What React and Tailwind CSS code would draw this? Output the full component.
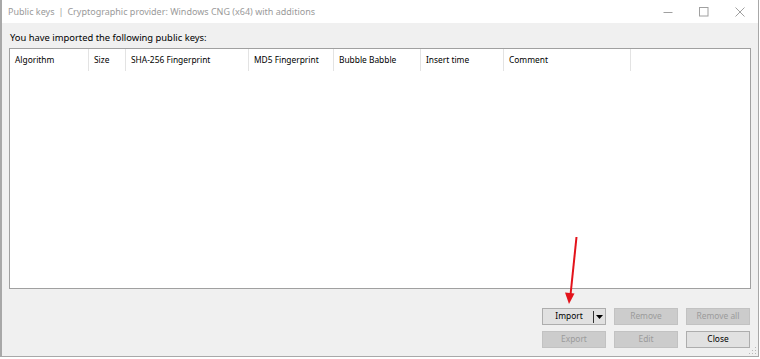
import React from "react";

const cols = [
  { w: "w-[79px]", t: "Algorithm" },
  { w: "w-[37px]", t: "Size" },
  { w: "w-[123px]", t: "SHA-256 Fingerprint" },
  { w: "w-[85px]", t: "MD5 Fingerprint" },
  { w: "w-[87px]", t: "Bubble Babble" },
  { w: "w-[83px]", t: "Insert time" },
  { w: "w-[127px]", t: "Comment" },
];

function Btn({ children, disabled, className = "" }) {
  return (
    <div
      className={
        "w-[64px] h-[17px] border flex items-center justify-center text-[8.4px] leading-none " +
        (disabled
          ? "bg-[#cccccc] border-[#c2c2c2] text-[#9b9b9b] "
          : "bg-[#e1e1e1] border-[#adadad] text-black ") +
        className
      }
    >
      {children}
    </div>
  );
}

export default function App() {
  return (
    <div
      className="w-[760px] h-[359px] bg-white overflow-hidden relative"
      style={{ fontFamily: '"Noto Sans", "Open Sans", sans-serif' }}
    >
      <div className="w-[759px] h-[357px] border-l-2 border-r border-b border-[#a8a8a8] flex flex-col">
        {/* Title bar */}
        <div className="h-[23px] bg-white flex items-center">
          <div className="pl-[6px] text-[9px] text-[#9a9a9a] leading-none flex-1 whitespace-nowrap flex items-center">
            <span>Public keys</span>
            <span className="mx-[4px]">|</span>
            <span>Cryptographic provider: Windows CNG (x64) with additions</span>
          </div>
          <div className="flex h-full">
            <div className="w-[36px] h-full flex items-center justify-center">
              <svg width="10" height="10" viewBox="0 0 10 10">
                <line x1="0.5" y1="5.5" x2="9.5" y2="5.5" stroke="#a0a0a0" strokeWidth="1" />
              </svg>
            </div>
            <div className="w-[36px] h-full flex items-center justify-center">
              <svg width="10" height="10" viewBox="0 0 10 10">
                <rect x="0.5" y="0.5" width="8.5" height="8.5" fill="none" stroke="#a0a0a0" strokeWidth="1" />
              </svg>
            </div>
            <div className="w-[36px] h-full flex items-center justify-center">
              <svg width="10" height="10" viewBox="0 0 10 10">
                <path d="M0.5 0.5 L9.5 9.5 M9.5 0.5 L0.5 9.5" stroke="#a0a0a0" strokeWidth="1" />
              </svg>
            </div>
          </div>
        </div>

        {/* Body */}
        <div className="flex-1 bg-[#f0f0f0] flex flex-col px-[7px] relative">
          <div className="h-[15px] mt-[7px] pl-[1px] text-[9.4px] leading-[15px] text-black whitespace-nowrap">
            You have imported the following public keys:
          </div>
          <div className="mt-[3px] h-[241px] border border-[#a0a0a0] bg-white">
            <div className="flex h-[22px]">
              {cols.map((c) => (
                <div
                  key={c.t}
                  className={
                    c.w +
                    " h-full border-r border-[#e3e3e3] flex items-center pl-[5px] text-[8.4px] text-black whitespace-nowrap leading-none"
                  }
                >
                  {c.t}
                </div>
              ))}
            </div>
          </div>

          <div className="mt-[19px] flex flex-col items-end pr-[1px] gap-[6px]">
            <div className="flex gap-[8px]">
              <div className="w-[64px] h-[17px] border border-[#adadad] bg-[#e1e1e1] flex items-center text-[8.4px] leading-none relative">
                <div className="flex-1 flex items-center justify-center pl-[2px]">Import</div>
                <div className="w-[1px] h-[12px] bg-[#333333]"></div>
                <div className="w-[11px] flex items-center justify-center">
                  <svg width="7" height="4" viewBox="0 0 7 4">
                    <path d="M0 0 L7 0 L3.5 4 Z" fill="#000" />
                  </svg>
                </div>
              </div>
              <Btn disabled>Remove</Btn>
              <Btn disabled>Remove all</Btn>
            </div>
            <div className="flex gap-[8px]">
              <Btn disabled>Export</Btn>
              <Btn disabled>Edit</Btn>
              <Btn>Close</Btn>
            </div>
          </div>

          {/* size grip */}
          <svg className="absolute right-[1px] bottom-[1px]" width="8" height="8" viewBox="0 0 8 8">
            <rect x="6" y="0" width="1" height="1" fill="#b8b8b8" />
            <rect x="3" y="3" width="1" height="1" fill="#b8b8b8" />
            <rect x="6" y="3" width="1" height="1" fill="#b8b8b8" />
            <rect x="0" y="6" width="1" height="1" fill="#b8b8b8" />
            <rect x="3" y="6" width="1" height="1" fill="#b8b8b8" />
            <rect x="6" y="6" width="1" height="1" fill="#b8b8b8" />
          </svg>
        </div>
      </div>

      {/* Red annotation arrow */}
      <svg className="absolute left-0 top-0 pointer-events-none" width="760" height="359" viewBox="0 0 760 359">
        <line x1="576.5" y1="237" x2="570.5" y2="295" stroke="#e3131b" strokeWidth="2" />
        <path d="M565 292.5 L574.5 293.5 L569 304 Z" fill="#e3131b" />
      </svg>
    </div>
  );
}
